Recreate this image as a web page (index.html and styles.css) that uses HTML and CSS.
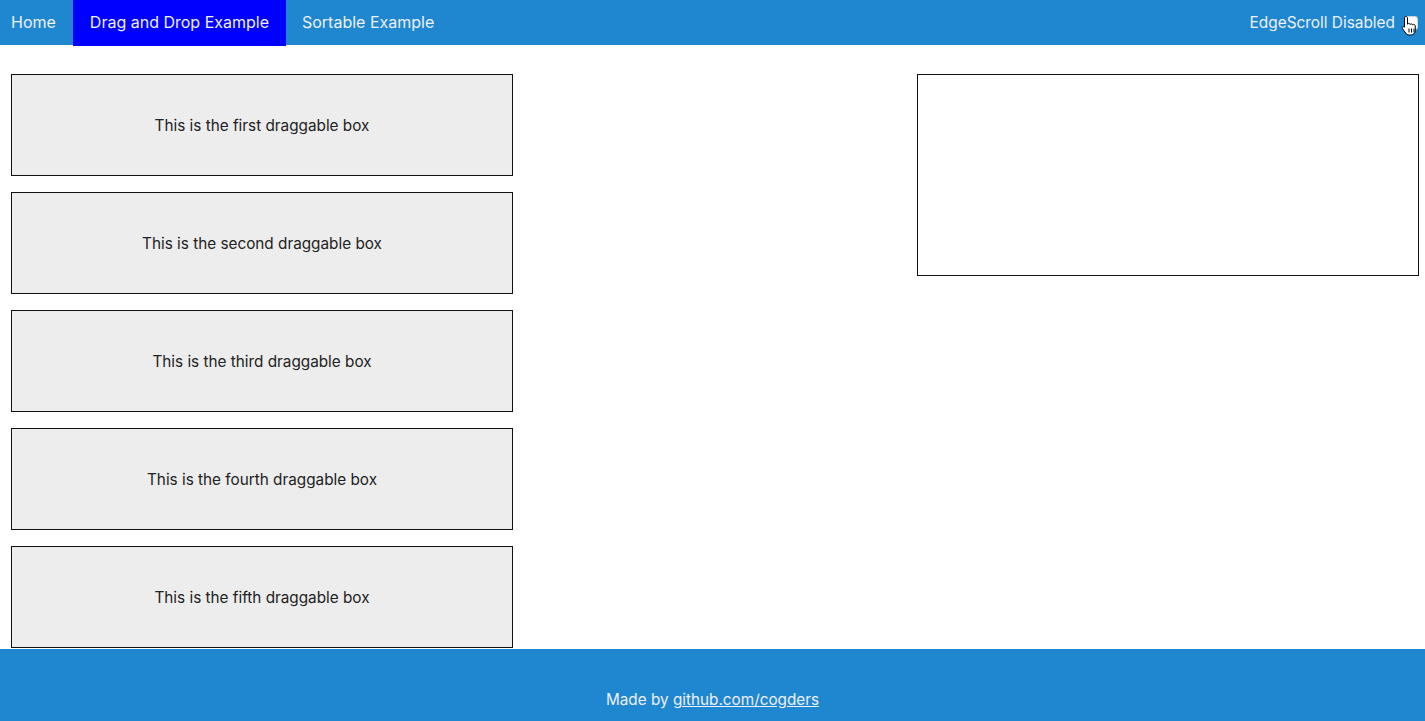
FILE: index.html
```html
<!DOCTYPE html>
<html>
<head>
<meta charset="utf-8">
<link rel="stylesheet" href="styles.css">
</head>
<body>
<div class="page">
  <header class="topbar">
    <nav class="nav">
      <a class="tab tab-first">Home</a>
      <a class="tab tab-active">Drag and Drop Example</a>
      <a class="tab tab-last">Sortable Example</a>
    </nav>
    <label class="toggle">
      <span>EdgeScroll Disabled</span>
      <span class="check"></span>
      <svg class="cursor" width="17" height="22" viewBox="0 0 17 22">
        <path d="M5 1.5c.9 0 1.5.6 1.5 1.5v6.2c.3-.5.8-.7 1.3-.7.7 0 1.2.4 1.4 1 .3-.4.7-.6 1.2-.6.7 0 1.2.4 1.4 1 .3-.3.6-.4 1-.4.9 0 1.5.7 1.5 1.6v4.3c0 2.6-1.8 4.6-4.4 4.6H8.2c-1.6 0-2.6-.7-3.5-1.9L1.6 13.800c-.5-.7-.4-1.5.2-1.9.6-.4 1.3-.3 1.8.3L3.5 12V3c0-.9.6-1.5 1.5-1.5z" fill="#fff" stroke="#000" stroke-width="1"/>
        <path d="M8 13.5v4M10.5 13.5v4M13 13.5v4" stroke="#000" stroke-width="1"/>
      </svg>
    </label>
  </header>
  <main class="content">
    <section class="list">
      <div class="box">This is the first draggable box</div>
      <div class="box">This is the second draggable box</div>
      <div class="box">This is the third draggable box</div>
      <div class="box">This is the fourth draggable box</div>
      <div class="box">This is the fifth draggable box</div>
    </section>
    <section class="drop"></section>
  </main>
  <footer class="footer">Made by <a class="link">github.com/cogders</a></footer>
</div>
</body>
</html>
```
FILE: styles.css
```css
* { box-sizing: border-box; }
html, body { margin: 0; padding: 0; }
body {
  font-family: Inter, "Open Sans", "Liberation Sans", sans-serif;
  font-size: 16px;
  color: #222;
  background: #fff;
}
.page {
  display: flex;
  flex-direction: column;
  min-height: 721px;
}
.topbar {
  height: 45px;
  background: #1f86d0;
  display: flex;
  justify-content: space-between;
  align-items: flex-start;
}
.nav { display: flex; }
.tab {
  height: 45px;
  line-height: 45px;
  padding: 0 17px;
  color: #eef0fa;
  white-space: nowrap;
}
.tab-first { padding-left: 11px; }
.tab-last { padding-left: 16px; }
.tab-active {
  background: #0000ff;
  height: 46px;
}
.toggle {
  position: relative;
  display: flex;
  align-items: center;
  height: 45px;
  color: #eef0fa;
  padding-right: 7px;
  font-size: 15.4px;
}
.check {
  width: 14px;
  height: 14px;
  margin-left: 9px;
  background: #fff;
  border-radius: 3px;
  border: 1px solid #c8d6e6;
}
.cursor {
  position: absolute;
  left: 151px;
  top: 15px;
}
.content {
  flex: 1;
  display: flex;
  justify-content: space-between;
  align-items: flex-start;
  padding: 29px 6px 1px 11px;
}
.list {
  display: flex;
  flex-direction: column;
  gap: 16px;
}
.box {
  width: 502px;
  height: 102px;
  border: 1px solid #111;
  background: #ededed;
  display: flex;
  align-items: center;
  justify-content: center;
  color: #222;
  font-size: 15.3px;
}
.drop {
  width: 502px;
  height: 202px;
  border: 1px solid #111;
  background: #fff;
}
.footer {
  height: 72px;
  background: #1f86d0;
  color: #eef0fa;
  text-align: center;
  padding-top: 41px;
  line-height: 20px;
  font-size: 15.3px;
}
.link {
  color: #eef0fa;
  text-decoration: underline;
}
```
